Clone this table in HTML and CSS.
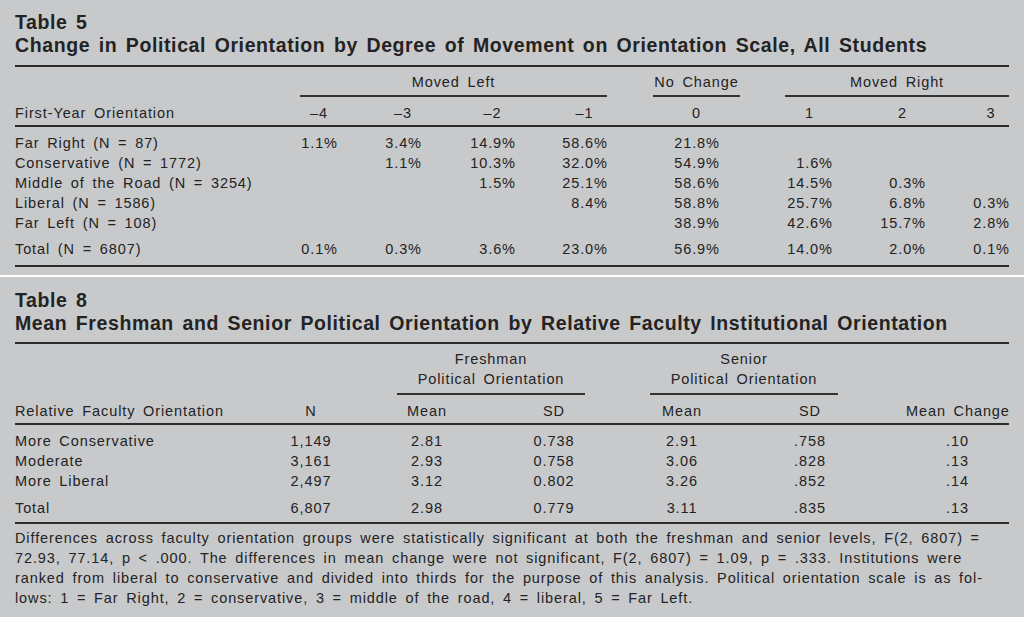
FILE: index.html
```html
<!DOCTYPE html>
<html>
<head>
<meta charset="utf-8">
<link rel="stylesheet" href="styles.css">
</head>
<body>
<div class="page">
  <section class="block t5">
    <h2 class="caption"><span>Table 5</span><span>Change in Political Orientation by Degree of Movement on Orientation Scale, All Students</span></h2>
    <div class="tab">
      <div class="g5 span5">
        <div class="sp sp-left">Moved Left</div>
        <div class="sp sp-none">No Change</div>
        <div class="sp sp-right">Moved Right</div>
      </div>
      <div class="g5 head5">
        <div class="lbl">First-Year Orientation</div>
        <div class="num"><span class="hc w4">–4</span></div>
        <div class="num"><span class="hc w4">–3</span></div>
        <div class="num"><span class="hc w5">–2</span></div>
        <div class="num"><span class="hc w5">–1</span></div>
        <div class="num"><span class="hc w5">0</span></div>
        <div class="num"><span class="hc w5">1</span></div>
        <div class="num"><span class="hc w5">2</span></div>
        <div class="num"><span class="hc w4">3</span></div>
      </div>
      <div class="body5">
        <div class="g5"><div class="lbl">Far Right (N = 87)</div><div class="num">1.1%</div><div class="num">3.4%</div><div class="num">14.9%</div><div class="num">58.6%</div><div class="num">21.8%</div><div class="num"></div><div class="num"></div><div class="num"></div></div>
        <div class="g5"><div class="lbl">Conservative (N = 1772)</div><div class="num"></div><div class="num">1.1%</div><div class="num">10.3%</div><div class="num">32.0%</div><div class="num">54.9%</div><div class="num">1.6%</div><div class="num"></div><div class="num"></div></div>
        <div class="g5"><div class="lbl">Middle of the Road (N = 3254)</div><div class="num"></div><div class="num"></div><div class="num">1.5%</div><div class="num">25.1%</div><div class="num">58.6%</div><div class="num">14.5%</div><div class="num">0.3%</div><div class="num"></div></div>
        <div class="g5"><div class="lbl">Liberal (N = 1586)</div><div class="num"></div><div class="num"></div><div class="num"></div><div class="num">8.4%</div><div class="num">58.8%</div><div class="num">25.7%</div><div class="num">6.8%</div><div class="num">0.3%</div></div>
        <div class="g5"><div class="lbl">Far Left (N = 108)</div><div class="num"></div><div class="num"></div><div class="num"></div><div class="num"></div><div class="num">38.9%</div><div class="num">42.6%</div><div class="num">15.7%</div><div class="num">2.8%</div></div>
        <div class="g5 total5"><div class="lbl">Total (N = 6807)</div><div class="num">0.1%</div><div class="num">0.3%</div><div class="num">3.6%</div><div class="num">23.0%</div><div class="num">56.9%</div><div class="num">14.0%</div><div class="num">2.0%</div><div class="num">0.1%</div></div>
      </div>
    </div>
  </section>
  <div class="sep"></div>
  <section class="block t8">
    <h2 class="caption"><span>Table 8</span><span>Mean Freshman and Senior Political Orientation by Relative Faculty Institutional Orientation</span></h2>
    <div class="tab tab8">
      <div class="g8 span8">
        <div class="sp sp-fresh">Freshman<br>Political Orientation</div>
        <div class="sp sp-senior">Senior<br>Political Orientation</div>
      </div>
      <div class="g8 head8">
        <div class="lbl">Relative Faculty Orientation</div>
        <div class="c">N</div>
        <div class="c">Mean</div>
        <div class="c">SD</div>
        <div class="c">Mean</div>
        <div class="c">SD</div>
        <div class="c mc">Mean Change</div>
      </div>
      <div class="body8">
        <div class="g8"><div class="lbl">More Conservative</div><div class="c">1,149</div><div class="c">2.81</div><div class="c">0.738</div><div class="c">2.91</div><div class="c">.758</div><div class="c mc">.10</div></div>
        <div class="g8"><div class="lbl">Moderate</div><div class="c">3,161</div><div class="c">2.93</div><div class="c">0.758</div><div class="c">3.06</div><div class="c">.828</div><div class="c mc">.13</div></div>
        <div class="g8"><div class="lbl">More Liberal</div><div class="c">2,497</div><div class="c">3.12</div><div class="c">0.802</div><div class="c">3.26</div><div class="c">.852</div><div class="c mc">.14</div></div>
        <div class="g8 total8"><div class="lbl">Total</div><div class="c">6,807</div><div class="c">2.98</div><div class="c">0.779</div><div class="c">3.11</div><div class="c">.835</div><div class="c mc">.13</div></div>
      </div>
    </div>
    <p class="note">Differences across faculty orientation groups were statistically significant at both the freshman and senior levels, F(2, 6807) =<br>72.93, 77.14, p &lt; .000. The differences in mean change were not significant, F(2, 6807) = 1.09, p = .333. Institutions were<br>ranked from liberal to conservative and divided into thirds for the purpose of this analysis. Political orientation scale is as fol-<br>lows: 1 = Far Right, 2 = conservative, 3 = middle of the road, 4 = liberal, 5 = Far Left.</p>
  </section>
</div>
</body>
</html>
```
FILE: styles.css
```css
html, body {
  margin: 0;
  padding: 0;
  background: #c8c9cb;
}
body {
  font-family: "Liberation Sans", Arial, Helvetica, sans-serif;
  color: #232323;
  font-size: 14.5px;
  line-height: 20px;
  letter-spacing: 0.9px;
  word-spacing: 2.8px;
}
.page {
  width: 1024px;
  height: 617px;
  overflow: hidden;
}
.block {
  padding: 0 15px;
}
.t5 {
  padding-top: 11px;
}
.t8 {
  padding-top: 11.5px;
}
.caption {
  margin: 0;
  font-size: 19.5px;
  line-height: 23px;
  font-weight: bold;
  letter-spacing: 0.6px;
  word-spacing: 2.6px;
}
.caption span {
  display: block;
}
.tab {
  margin-top: 8px;
  border-top: 2px solid #2b2b2b;
  border-bottom: 2px solid #2b2b2b;
}
.tab8 {
  margin-top: 7.5px;
}
.g5 {
  display: grid;
  grid-template-columns: 275px 47px 84px 94px 92px 112px 113px 93px 84px;
}
.g8 {
  display: grid;
  grid-template-columns: 245px 102px 130px 124px 132px 124px 137px;
}
.lbl {
  text-align: left;
  white-space: nowrap;
}
.num {
  text-align: right;
  white-space: nowrap;
  margin-right: -0.9px;
}
.hc {
  display: inline-block;
  text-align: center;
}
.w4 { width: 38px; }
.w5 { width: 47px; }
.c {
  text-align: center;
  white-space: nowrap;
}
.mc {
  padding-left: 34px;
}
.sp {
  text-align: center;
  border-bottom: 2px solid #333;
  padding-bottom: 3px;
  grid-row: 1;
}
.span5 {
  padding-top: 5px;
}
.sp-left {
  grid-column: 2 / 6;
  margin-left: 10px;
}
.sp-none {
  grid-column: 6 / 7;
  margin-left: 46px;
  margin-right: -21px;
}
.sp-right {
  grid-column: 7 / 10;
  margin-left: 66px;
}
.head5 {
  padding-top: 6px;
  padding-bottom: 2px;
  border-bottom: 2px solid #2b2b2b;
}
.body5 {
  padding-top: 6px;
  padding-bottom: 6px;
}
.total5 {
  margin-top: 6px;
}
.sep {
  margin-top: 8px;
  height: 2px;
  background: #ffffff;
}
.span8 {
  padding-top: 5px;
}
.span8 .sp {
  padding-bottom: 4px;
}
.sp-fresh {
  grid-column: 3 / 5;
  margin-left: 35px;
  margin-right: 31px;
}
.sp-senior {
  grid-column: 5 / 7;
  margin-left: 34px;
  margin-right: 34px;
}
.head8 {
  padding-top: 6px;
  padding-bottom: 2px;
  border-bottom: 2px solid #2b2b2b;
}
.body8 {
  padding-top: 6px;
  padding-bottom: 4px;
}
.total8 {
  margin-top: 7px;
}
.note {
  margin: 0;
  padding-top: 4px;
  white-space: nowrap;
}
```
